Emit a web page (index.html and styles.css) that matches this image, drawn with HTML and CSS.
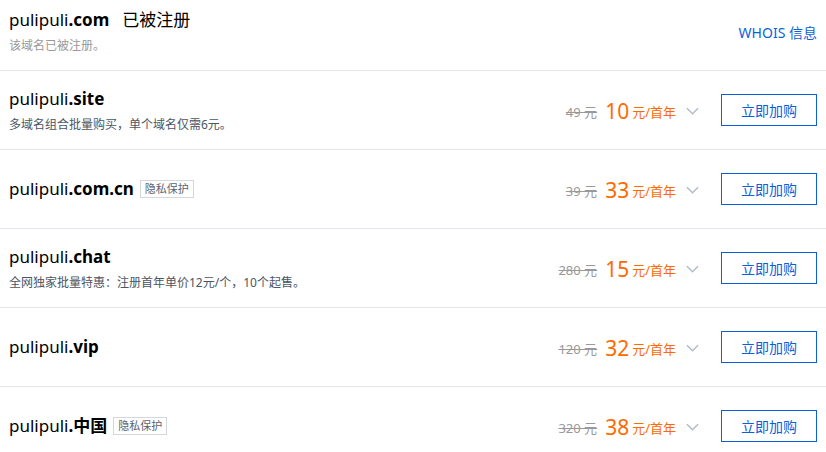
FILE: index.html
```html
<!DOCTYPE html>
<html lang="zh-CN">
<head>
    <meta charset="UTF-8">
    <title>域名注册</title>
    <link rel="stylesheet" href="styles.css">
</head>
<body>

    <!-- Taken domain -->
    <div class="row row-taken">
        <div class="info">
            <div class="title">pulipuli<b>.com</b><span class="status">已被注册</span></div>
            <div class="desc light">该域名已被注册。</div>
        </div>
        <a class="whois" href="#">WHOIS 信息</a>
    </div>

    <div class="row">
        <div class="info">
            <div class="title">pulipuli<b>.site</b></div>
            <div class="desc">多域名组合批量购买，单个域名仅需6元。</div>
        </div>
        <div class="price">
            <span class="old">49 元</span>
            <span class="now">10</span><span class="unit">元/首年</span>
            <svg class="chevron" viewBox="0 0 14 8"><path d="M1 1l6 6 6-6" /></svg>
        </div>
        <button class="buy">立即加购</button>
    </div>

    <div class="row">
        <div class="info">
            <div class="title">pulipuli<b>.com.cn</b><span class="tag">隐私保护</span></div>
        </div>
        <div class="price">
            <span class="old">39 元</span>
            <span class="now">33</span><span class="unit">元/首年</span>
            <svg class="chevron" viewBox="0 0 14 8"><path d="M1 1l6 6 6-6" /></svg>
        </div>
        <button class="buy">立即加购</button>
    </div>

    <div class="row">
        <div class="info">
            <div class="title">pulipuli<b>.chat</b></div>
            <div class="desc">全网独家批量特惠：注册首年单价12元/个，10个起售。</div>
        </div>
        <div class="price">
            <span class="old">280 元</span>
            <span class="now">15</span><span class="unit">元/首年</span>
            <svg class="chevron" viewBox="0 0 14 8"><path d="M1 1l6 6 6-6" /></svg>
        </div>
        <button class="buy">立即加购</button>
    </div>

    <div class="row">
        <div class="info">
            <div class="title">pulipuli<b>.vip</b></div>
        </div>
        <div class="price">
            <span class="old">120 元</span>
            <span class="now">32</span><span class="unit">元/首年</span>
            <svg class="chevron" viewBox="0 0 14 8"><path d="M1 1l6 6 6-6" /></svg>
        </div>
        <button class="buy">立即加购</button>
    </div>

    <div class="row">
        <div class="info">
            <div class="title">pulipuli<b>.中国</b><span class="tag">隐私保护</span></div>
        </div>
        <div class="price">
            <span class="old">320 元</span>
            <span class="now">38</span><span class="unit">元/首年</span>
            <svg class="chevron" viewBox="0 0 14 8"><path d="M1 1l6 6 6-6" /></svg>
        </div>
        <button class="buy">立即加购</button>
    </div>

</body>
</html>
```

FILE: styles.css
```css
/* General */
body {
    margin: 0;
    background: #fff;
    font-family: "Noto Sans", "Noto Sans CJK SC", sans-serif;
    color: #000;
}

/* Rows */
.row {
    display: flex;
    align-items: center;
    height: 78px;
    padding: 0 9px;
    border-bottom: 1px solid #e3e6eb;
}

.row-taken {
    height: 71px;
    align-items: flex-start;
    box-sizing: border-box;
    padding-top: 7px;
}

.info {
    flex: 1;
}

.title {
    display: flex;
    align-items: center;
    font-size: 17px;
    line-height: 26px;
}

.title b {
    font-weight: bold;
}

.status {
    margin-left: 13px;
    font-size: 17px;
}

.desc {
    font-size: 12px;
    line-height: 18px;
    margin-top: 4px;
    color: #4b5563;
}

.desc.light {
    color: #999;
}

.tag {
    margin-left: 6px;
    padding: 0 4px;
    border: 1px solid #d4d7dc;
    font-size: 11px;
    line-height: 16px;
    color: #5a6270;
}

.whois {
    margin-top: 15px;
    color: #0b5fdc;
    font-size: 14px;
    text-decoration: none;
}

/* Price */
.price {
    display: flex;
    align-items: center;
    margin-top: 2px;
}

.old {
    color: #999;
    font-size: 13px;
    text-decoration: line-through;
    margin-right: 8px;
}

.now {
    color: #ff6a00;
    font-size: 21px;
    margin-right: 3px;
}

.unit {
    color: #ff6a00;
    font-size: 13px;
}

.chevron {
    width: 13px;
    height: 8px;
    margin-left: 10px;
    fill: none;
    stroke: #b4bcc8;
    stroke-width: 1.6;
}

.buy {
    margin-left: 22px;
    width: 96px;
    height: 32px;
    background: #fff;
    border: 1px solid #0b5fdc;
    color: #0b5fdc;
    font-family: inherit;
    font-size: 14px;
    cursor: pointer;
}

.buy:hover {
    background: #f0f5ff;
}
```
